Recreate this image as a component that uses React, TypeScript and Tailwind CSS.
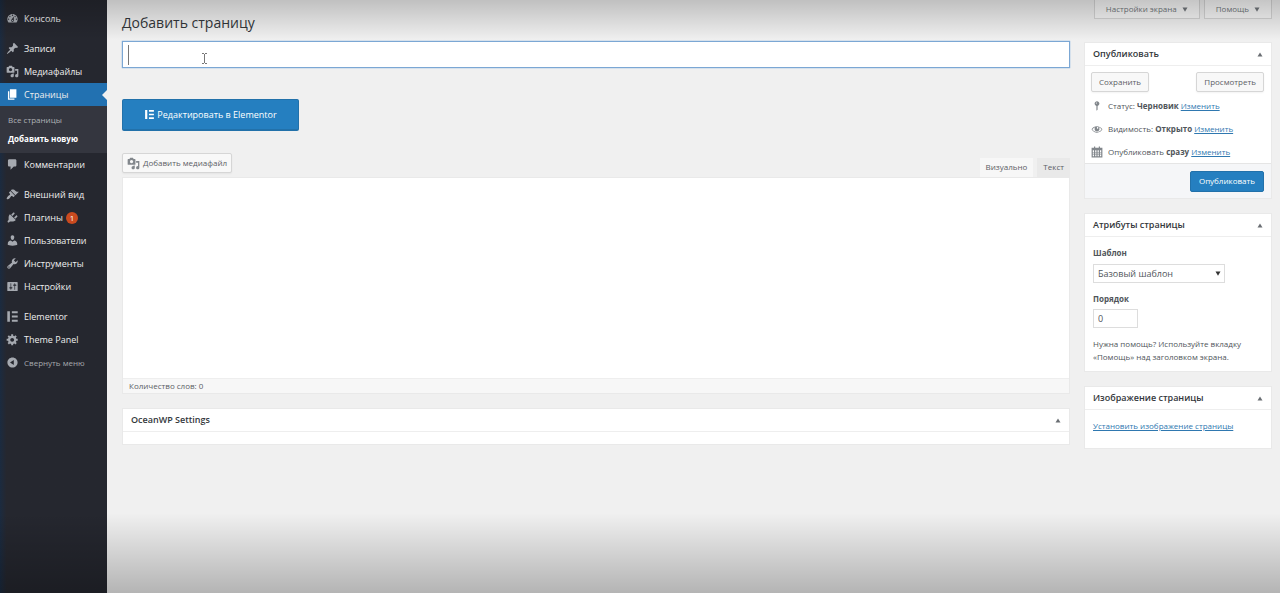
import { ReactNode } from "react";
import clsx from "clsx";

const icons = {
  dashboard:
    "M3.76 16h12.48c1.1-1.37 1.76-3.11 1.76-5 0-4.42-3.58-8-8-8s-8 3.58-8 8c0 1.89.66 3.63 1.76 5zM10 4c.55 0 1 .45 1 1s-.45 1-1 1-1-.45-1-1 .45-1 1-1zM6 6c.55 0 1 .45 1 1s-.45 1-1 1-1-.45-1-1 .45-1 1-1zm8 0c.55 0 1 .45 1 1s-.45 1-1 1-1-.45-1-1 .45-1 1-1zm-5.37 5.55L12 7v6c0 1.1-.9 2-2 2s-2-.9-2-2c0-.57.24-1.08.63-1.45zM4 10c.55 0 1 .45 1 1s-.45 1-1 1-1-.45-1-1 .45-1 1-1zm12 0c.55 0 1 .45 1 1s-.45 1-1 1-1-.45-1-1 .45-1 1-1zm-5 3c0-.55-.45-1-1-1s-1 .45-1 1 .45 1 1 1 1-.45 1-1z",
  post: "M10.44 3.02l1.82-1.82 6.36 6.35-1.83 1.82c-1.05-.68-2.48-.57-3.41.36l-.75.75c-.92.93-1.04 2.35-.35 3.41l-1.83 1.82-2.41-2.41-2.8 2.79c-.42.42-3.38 2.71-3.8 2.29s1.86-3.39 2.28-3.81l2.79-2.79L4.1 9.36l1.83-1.82c1.05.69 2.48.57 3.4-.36l.75-.75c.93-.92 1.05-2.35.36-3.41z",
  media:
    "M13 11V4c0-.55-.45-1-1-1h-1.67L9 1H5L3.67 3H2c-.55 0-1 .45-1 1v7c0 .55.45 1 1 1h10c.55 0 1-.45 1-1zM7 4.5c1.38 0 2.5 1.12 2.5 2.5S8.38 9.5 7 9.5 4.5 8.38 4.5 7 5.62 4.5 7 4.5zM14 6h5v10.5c0 1.38-1.12 2.5-2.5 2.5S14 17.88 14 16.5s1.12-2.5 2.5-2.5c.17 0 .34.02.5.05V9h-3V6zm-4 8.05V13h2v3.5c0 1.38-1.12 2.5-2.5 2.5S7 17.88 7 16.5 8.12 14 9.5 14c.17 0 .34.02.5.05z",
  page: "M6 15V2h10v13H6zm-1 1h8v2H3V5h2v11z",
  comments:
    "M5 2h9c1.1 0 2 .9 2 2v7c0 1.1-.9 2-2 2h-2l-5 5v-5H5c-1.1 0-2-.9-2-2V4c0-1.1.9-2 2-2z",
  appearance:
    "M14.48 11.06L7.41 3.99l1.5-1.5c.5-.56 2.3-.47 3.51.32 1.21.8 1.43 1.28 2.91 2.1 1.18.64 2.45 1.26 4.45.85zm-.71.71L6.7 4.7 4.93 6.47c-.39.39-.39 1.02 0 1.41l1.06 1.06c.39.39.39 1.03 0 1.42-.6.6-1.43 1.11-2.21 1.69-.35.26-.7.53-1.01.84C1.43 14.23.4 16.08 1.4 17.07c.99 1 2.84-.03 4.18-1.36.31-.31.58-.66.85-1.02.57-.78 1.08-1.61 1.69-2.21.39-.39 1.02-.39 1.41 0l1.06 1.06c.39.39 1.02.39 1.41 0z",
  plugins:
    "M13.11 4.36L9.87 7.6 8 5.73l3.24-3.24c.35-.34 1.05-.2 1.56.32.52.51.66 1.21.31 1.55zm-8 1.77l.91-1.12 9.01 9.01-1.19.84c-.71.71-2.63 1.16-3.82 1.16H6.14L4.9 17.26c-.59.59-1.54.59-2.12 0-.59-.58-.59-1.53 0-2.12l1.24-1.24v-3.88c0-1.13.4-3.19 1.09-3.89zm7.26 3.97l3.24-3.24c.34-.35 1.04-.21 1.55.31.52.51.66 1.21.31 1.55l-3.24 3.25z",
  users:
    "M10 9.25c-2.27 0-2.73-3.44-2.73-3.44C7 4.02 7.82 2 9.97 2c2.16 0 2.98 2.02 2.71 3.81 0 0-.41 3.44-2.68 3.44zm0 2.57L12.72 10c2.39 0 4.52 2.33 4.52 4.53v2.49s-3.65 1.13-7.24 1.13c-3.65 0-7.24-1.13-7.24-1.13v-2.49c0-2.25 1.94-4.48 4.47-4.48z",
  tools:
    "M16.68 9.77c-1.34 1.34-3.3 1.67-4.95.99l-5.41 6.52c-.99.99-2.59.99-3.58 0s-.99-2.59 0-3.57l6.52-5.42c-.68-1.65-.35-3.61.99-4.95 1.28-1.28 3.12-1.62 4.72-1.06l-2.89 2.89 2.82 2.82 2.86-2.87c.53 1.58.18 3.39-1.08 4.65zM3.81 16.21c.4.39 1.04.39 1.43 0 .4-.4.4-1.04 0-1.43-.39-.4-1.03-.4-1.43 0-.39.39-.39 1.03 0 1.43z",
  settings:
    "M18 16V4c0-.55-.45-1-1-1H3c-.55 0-1 .45-1 1v12c0 .55.45 1 1 1h14c.55 0 1-.45 1-1zM8 11h1c.55 0 1 .45 1 1s-.45 1-1 1H8v1.5c0 .28-.22.5-.5.5s-.5-.22-.5-.5V13H6c-.55 0-1-.45-1-1s.45-1 1-1h1V5.5c0-.28.22-.5.5-.5s.5.22.5.5V11zm5-2h-1c-.55 0-1-.45-1-1s.45-1 1-1h1V5.5c0-.28.22-.5.5-.5s.5.22.5.5V7h1c.55 0 1 .45 1 1s-.45 1-1 1h-1v5.5c0 .28-.22.5-.5.5s-.5-.22-.5-.5V9z",
  elementor: "M2 2h4v16H2V2zm7 0h9v3H9V2zm0 6.5h9v3H9v-3zM9 15h9v3H9v-3z",
  generic:
    "M18 12h-2.18c-.17.7-.44 1.35-.81 1.93l1.54 1.54-2.1 2.1-1.54-1.54c-.58.36-1.23.63-1.91.79V19H8v-2.18c-.68-.16-1.33-.43-1.91-.79l-1.54 1.54-2.12-2.12 1.54-1.54c-.36-.58-.63-1.23-.79-1.91H1V9.03h2.17c.16-.7.44-1.35.8-1.94L2.43 5.55l2.1-2.1 1.54 1.54c.58-.37 1.24-.64 1.93-.81V2h3v2.18c.68.16 1.33.43 1.91.79l1.54-1.54 2.12 2.12-1.54 1.54c.36.59.64 1.24.8 1.94H18V12zm-8.5 1.5c1.66 0 3-1.34 3-3s-1.34-3-3-3-3 1.34-3 3 1.34 3 3 3z",
  collapse:
    "M10 2.16c4.33 0 7.84 3.51 7.84 7.84s-3.51 7.84-7.84 7.84S2.16 14.33 2.16 10 5.67 2.16 10 2.16zm2 11.72V6.12L6.18 9.97z",
  status:
    "M14 6c0 1.86-1.28 3.41-3 3.86V16c0 1-2 2-2 2V9.86c-1.72-.45-3-2-3-3.86 0-2.21 1.79-4 4-4s4 1.79 4 4zM8 5c0 .55.45 1 1 1s1-.45 1-1-.45-1-1-1-1 .45-1 1z",
  visibility:
    "M18.3 9.5C15 4.9 8.5 3.8 3.9 7.2c-1.2.9-2.2 2.1-3 3.4.2.4.5.8.8 1.2 3.3 4.6 9.6 5.6 14.2 2.4.9-.7 1.7-1.4 2.4-2.4.3-.4.5-.8.8-1.2-.3-.4-.5-.8-.8-1.1zm-8.2-2.3c.5-.5 1.3-.5 1.8 0s.5 1.3 0 1.8-1.3.5-1.8 0-.5-1.3 0-1.8zm-.1 7.7c-3.1 0-6-1.6-7.7-4.2C3.5 9 5.1 7.8 7 7.2c-.7.8-1 1.7-1 2.7 0 2.2 1.7 4.1 4 4.1 2.2 0 4.1-1.7 4.1-4v-.1c0-1-.4-2-1.1-2.7 1.9.6 3.5 1.8 4.7 3.5-1.7 2.6-4.6 4.2-7.7 4.2z",
  calendar:
    "M15 3h4v16H1V3h4V1h2v2h6V1h2v2zM3 7v3h2V7H3zm4 0v3h2V7H7zm4 0v3h2V7h-2zm4 0v3h2V7h-2zM3 11v2h2v-2H3zm4 0v2h2v-2H7zm4 0v2h2v-2h-2zm4 0v2h2v-2h-2zM3 14v3h2v-3H3zm4 0v3h2v-3H7zm4 0v3h2v-3h-2zm4 0v3h2v-3h-2z",
};

type IconName = keyof typeof icons;

type MenuEntry = {
  label: string;
  icon: IconName;
  active?: boolean;
  badge?: number;
  muted?: boolean;
};

const menu: MenuEntry[][] = [
  [{ label: "Консоль", icon: "dashboard" }],
  [
    { label: "Записи", icon: "post" },
    { label: "Медиафайлы", icon: "media" },
    { label: "Страницы", icon: "page", active: true },
    { label: "Комментарии", icon: "comments" },
  ],
  [
    { label: "Внешний вид", icon: "appearance" },
    { label: "Плагины", icon: "plugins", badge: 1 },
    { label: "Пользователи", icon: "users" },
    { label: "Инструменты", icon: "tools" },
    { label: "Настройки", icon: "settings" },
  ],
  [
    { label: "Elementor", icon: "elementor" },
    { label: "Theme Panel", icon: "generic" },
    { label: "Свернуть меню", icon: "collapse", muted: true },
  ],
];

const Icon = ({ name, className }: { name: IconName; className?: string }) => (
  <svg
    viewBox="0 0 20 20"
    fill="currentColor"
    fillRule="evenodd"
    aria-hidden="true"
    className={clsx("shrink-0", className)}
  >
    <path d={icons[name]} />
  </svg>
);

const Arrow = ({ up }: { up?: boolean }) => (
  <svg viewBox="0 0 6 5" fill="currentColor" aria-hidden="true" className="h-[5px] w-[6px] shrink-0">
    <path d={up ? "M3 .5L5.5 4.5H.5z" : "M.5 .5h5L3 4.8z"} />
  </svg>
);

const MenuItem = ({ item }: { item: MenuEntry }) => {
  const className = clsx(
    "relative flex h-[23px] w-full items-center gap-[5px] pl-[6px]",
    item.active && "bg-[#2271b1]",
    item.muted ? "text-[8px] text-[#a5a9ae]" : "text-[9px] font-medium text-[#eeeeee]"
  );
  const content = (
    <>
      <Icon
        name={item.icon}
        className={clsx("size-[13px]", item.active ? "text-white" : "text-[#a5a9b0]")}
      />
      <span>{item.label}</span>
      {item.badge && (
        <span className="-ml-[2px] flex size-3 items-center justify-center rounded-full bg-[#ca4a1f] text-[8px] text-white">
          {item.badge}
        </span>
      )}
      {item.active && (
        <span className="absolute right-0 border-y-[5px] border-r-[5px] border-y-transparent border-r-[#f0f0f0]" />
      )}
    </>
  );

  if (item.muted) {
    return (
      <button type="button" className={className}>
        {content}
      </button>
    );
  }
  return (
    <a href="#" className={className}>
      {content}
    </a>
  );
};

const Sidebar = () => (
  <nav className="w-[107px] shrink-0 bg-[#25272f] bg-linear-to-r from-[#1b2b40] to-[#25272f] to-6% pt-[7px]">
    {menu.map((group, i) => (
      <ul key={i} className="mb-[7px]">
        {group.map((item) => (
          <li key={item.label}>
            <MenuItem item={item} />
            {item.active && (
              <ul className="h-[47px] bg-[#34363f] px-2 pt-1 text-[8px] leading-[19px]">
                <li>
                  <a href="#" className="text-[#aeb1b6]">
                    Все страницы
                  </a>
                </li>
                <li>
                  <a href="#" className="font-bold text-white">
                    Добавить новую
                  </a>
                </li>
              </ul>
            )}
          </li>
        ))}
      </ul>
    ))}
  </nav>
);

const Postbox = ({ title, children }: { title: string; children?: ReactNode }) => (
  <section className="border border-[#e9e9e9] bg-white">
    <div className="flex h-[23px] items-center justify-between border-b border-[#eeeeee] px-2">
      <h2 className="text-[9px] font-semibold text-[#33373b]">{title}</h2>
      <button type="button" aria-label={title} className="text-[#6a6e73]">
        <Arrow up />
      </button>
    </div>
    {children}
  </section>
);

const buttonStyle = "rounded-xs border border-[#d6d6d6] bg-[#f8f8f8] text-[#5c6065] shadow-xs";

const PublishRow = ({ icon, label, value }: { icon: IconName; label: string; value: string }) => (
  <p className="flex h-[23px] items-center gap-[5px] text-[8px] text-[#50555a]">
    <Icon name={icon} className="size-3 text-[#82878c]" />
    <span>
      {label} <b className="font-bold">{value}</b>{" "}
      <a href="#" className="text-[#2f78b0] underline">
        Изменить
      </a>
    </span>
  </p>
);

const Editor = () => (
  <main className="min-w-0 flex-1">
    <div className="relative">
      <input
        type="text"
        aria-label="Введите заголовок"
        className="block h-[27px] w-full border border-[#7ba7d4] bg-white px-2 text-sm shadow-[0_0_1px_#5b9dd9] outline-none"
      />
      <span className="absolute top-1 left-[6px] h-5 w-px bg-[#777777]" />
      <svg
        viewBox="0 0 7 11"
        fill="none"
        stroke="#777777"
        aria-hidden="true"
        className="absolute top-3 left-[79px] h-[11px] w-[7px]"
      >
        <path d="M1 .5h2M4 .5h2M3.5 1v9M1 10.5h2M4 10.5h2" />
      </svg>
    </div>

    <button
      type="button"
      className="mt-[31px] flex h-8 w-[177px] items-center justify-center gap-[2px] rounded-xs border border-b-2 border-[#2271aa] bg-[#257fc0] text-[9px] text-white"
    >
      <Icon name="elementor" className="size-[11px]" />
      Редактировать в Elementor
    </button>

    <div className="mt-[22px] flex h-6 items-start justify-between">
      <button
        type="button"
        className={clsx(buttonStyle, "flex h-5 items-center gap-[3px] px-1 text-[8px]")}
      >
        <Icon name="media" className="size-[13px] text-[#82878c]" />
        Добавить медиафайл
      </button>
      <div className="flex gap-1 self-end text-[8px] leading-[18px] text-[#5c6065]">
        <button type="button" className="bg-[#f7f7f7] px-[6px] pb-px">
          Визуально
        </button>
        <button type="button" className="bg-[#e9e9e9] px-[6px] pb-px">
          Текст
        </button>
      </div>
    </div>

    <div className="border border-[#e9e9e9] bg-white">
      <textarea
        aria-label="Содержимое страницы"
        className="block h-[200px] w-full resize-none p-2 text-xs outline-none"
      />
      <p className="border-t border-[#eeeeee] bg-[#f7f7f7] px-[6px] pb-px text-[8px] leading-[13px] text-[#5c6065]">
        Количество слов: 0
      </p>
    </div>

    <div className="mt-[14px]">
      <Postbox title="OceanWP Settings">
        <div className="h-3" />
      </Postbox>
    </div>
  </main>
);

const SidePanels = () => (
  <aside className="flex w-[188px] shrink-0 flex-col gap-[14px] pt-px">
    <Postbox title="Опубликовать">
      <div className="px-[6px] pt-[6px]">
        <div className="mb-[2px] flex justify-between pr-px text-[8px]">
          <button type="button" className={clsx(buttonStyle, "h-5 px-[7px]")}>
            Сохранить
          </button>
          <button type="button" className={clsx(buttonStyle, "h-5 px-[7px]")}>
            Просмотреть
          </button>
        </div>
        <PublishRow icon="status" label="Статус:" value="Черновик" />
        <PublishRow icon="visibility" label="Видимость:" value="Открыто" />
        <PublishRow icon="calendar" label="Опубликовать" value="сразу" />
      </div>
      <div className="flex h-[35px] items-center justify-end border-t border-[#e5e5e5] bg-[#f5f6f8] pr-[7px]">
        <button
          type="button"
          className="h-[21px] rounded-xs border border-[#2271aa] bg-[#257fc0] px-2 text-[8px] text-white"
        >
          Опубликовать
        </button>
      </div>
    </Postbox>

    <Postbox title="Атрибуты страницы">
      <div className="px-2 pt-[10px] pb-2 text-[#50555a]">
        <label htmlFor="template" className="block text-[8px] leading-3 font-bold">
          Шаблон
        </label>
        <div className="relative mt-[5px] w-[132px]">
          <select
            id="template"
            className="block h-[19px] w-full appearance-none border border-[#dddddd] bg-white px-1 text-[9px]"
          >
            <option>Базовый шаблон</option>
          </select>
          <span className="pointer-events-none absolute top-[7px] right-1 text-[#333333]">
            <Arrow />
          </span>
        </div>
        <label htmlFor="order" className="mt-[10px] block text-[8px] leading-3 font-bold">
          Порядок
        </label>
        <input
          id="order"
          type="text"
          defaultValue="0"
          className="mt-1 block h-[19px] w-[45px] border border-[#dddddd] px-1 text-[9px]"
        />
        <p className="mt-[9px] text-[8px] leading-[13px]">
          Нужна помощь? Используйте вкладку «Помощь» над заголовком экрана.
        </p>
      </div>
    </Postbox>

    <Postbox title="Изображение страницы">
      <p className="px-2 pt-[9px] pb-4 text-[8px] leading-[13px]">
        <a href="#" className="text-[#2f78b0] underline">
          Установить изображение страницы
        </a>
      </p>
    </Postbox>
  </aside>
);

const App = () => {
  return (
    <div className="relative flex min-h-screen bg-[#f0f0f0] font-['Open_Sans','Noto_Sans',sans-serif]">
      <Sidebar />
      <div className="min-w-0 flex-1 pr-2 pl-[15px]">
        <header className="flex h-[41px] items-start justify-between">
          <h1 className="pt-3 text-[14px] leading-[22px] text-[#33373b]">Добавить страницу</h1>
          <div className="flex gap-1 text-[8px] text-[#72777c]">
            {["Настройки экрана", "Помощь"].map((label) => (
              <button
                key={label}
                type="button"
                className="flex h-[19px] items-center gap-[5px] border border-t-0 border-[#d5d5d5] bg-[#f7f7f7] px-[11px]"
              >
                {label}
                <Arrow />
              </button>
            ))}
          </div>
        </header>
        <div className="flex items-start gap-[14px]">
          <Editor />
          <SidePanels />
        </div>
      </div>

      {/* shading along the top and bottom edges */}
      <div className="pointer-events-none absolute inset-x-0 top-0 h-10 bg-linear-to-b from-black/20 to-transparent" />
      <div className="pointer-events-none absolute inset-x-0 bottom-0 h-20 bg-linear-to-t from-black/25 to-transparent" />
    </div>
  );
};

export default App;
